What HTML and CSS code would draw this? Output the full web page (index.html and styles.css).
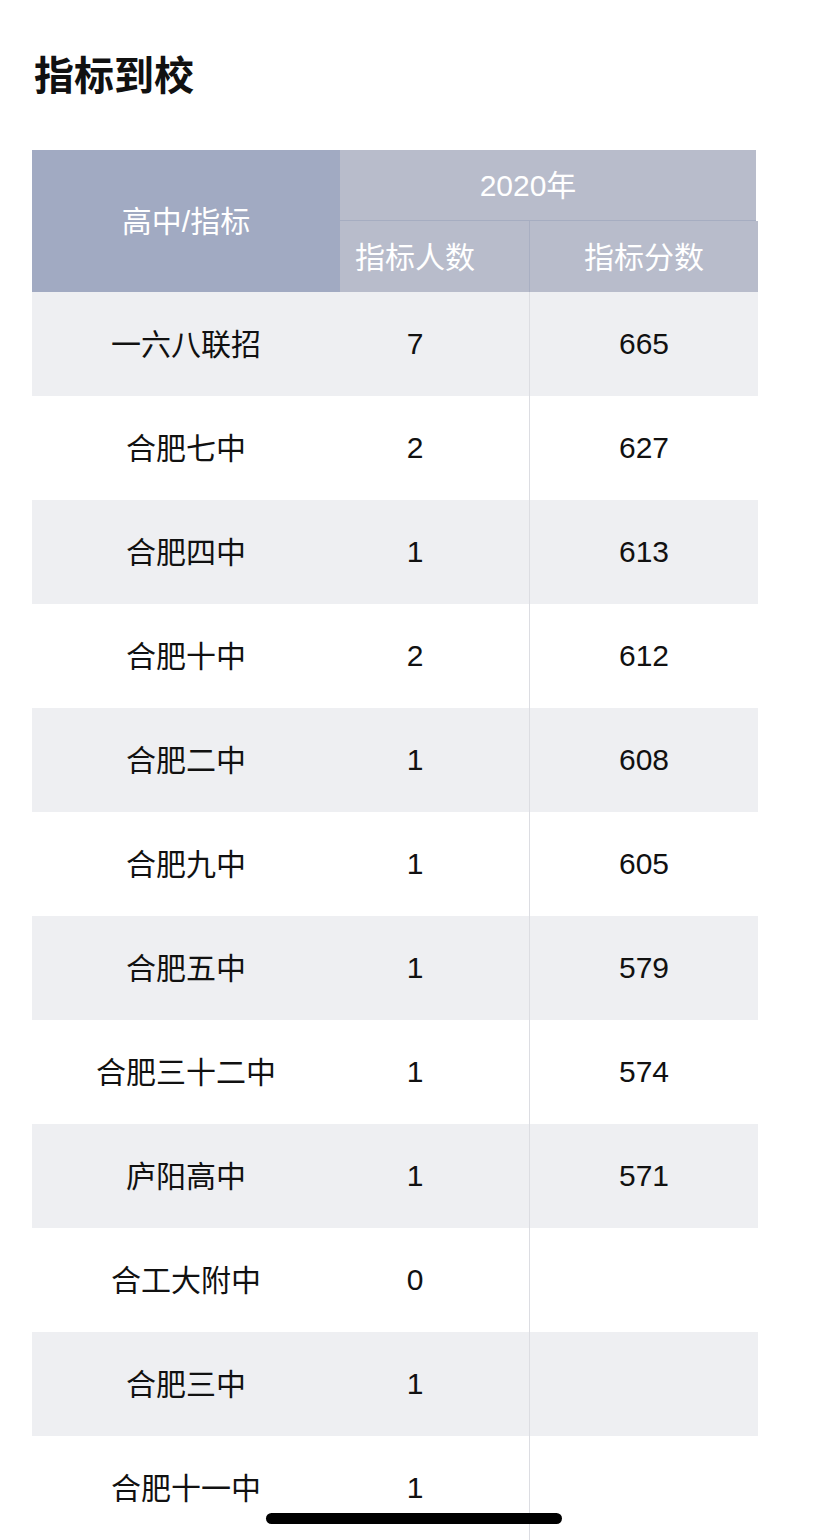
FILE: index.html
```html
<!DOCTYPE html>
<html lang="zh-CN">
<head>
<meta charset="utf-8">
<title>指标到校</title>
<link rel="stylesheet" href="styles.css">
</head>
<body>
<div class="page">
  <h1 class="title">指标到校</h1>
  <div class="table">
    <div class="thead">
      <div class="th th-school">高中/指标</div>
      <div class="th th-year">2020年</div>
      <div class="th th-count">指标人数</div>
      <div class="th th-score">指标分数</div>
    </div>
    <div class="row alt"><div class="c c1">一六八联招</div><div class="c c2">7</div><div class="c c3">665</div></div>
    <div class="row"><div class="c c1">合肥七中</div><div class="c c2">2</div><div class="c c3">627</div></div>
    <div class="row alt"><div class="c c1">合肥四中</div><div class="c c2">1</div><div class="c c3">613</div></div>
    <div class="row"><div class="c c1">合肥十中</div><div class="c c2">2</div><div class="c c3">612</div></div>
    <div class="row alt"><div class="c c1">合肥二中</div><div class="c c2">1</div><div class="c c3">608</div></div>
    <div class="row"><div class="c c1">合肥九中</div><div class="c c2">1</div><div class="c c3">605</div></div>
    <div class="row alt"><div class="c c1">合肥五中</div><div class="c c2">1</div><div class="c c3">579</div></div>
    <div class="row"><div class="c c1">合肥三十二中</div><div class="c c2">1</div><div class="c c3">574</div></div>
    <div class="row alt"><div class="c c1">庐阳高中</div><div class="c c2">1</div><div class="c c3">571</div></div>
    <div class="row"><div class="c c1">合工大附中</div><div class="c c2">0</div><div class="c c3"></div></div>
    <div class="row alt"><div class="c c1">合肥三中</div><div class="c c2">1</div><div class="c c3"></div></div>
    <div class="row"><div class="c c1">合肥十一中</div><div class="c c2">1</div><div class="c c3"></div></div>
  </div>
</div>
<div class="home-indicator"></div>
</body>
</html>
```

FILE: styles.css
```css
html, body {
  margin: 0;
  padding: 0;
  background: #ffffff;
  overflow: hidden;
}
body {
  width: 828px;
  height: 1540px;
  position: relative;
  font-family: "Liberation Sans", "Noto Sans CJK SC", sans-serif;
  color: #111111;
}
.page {
  padding: 0 0 0 32px;
}
.title {
  margin: 0;
  padding: 48px 0 0 2px;
  height: 150px;
  box-sizing: border-box;
  font-family: "Noto Sans CJK SC", sans-serif;
  font-weight: 700;
  font-size: 40px;
  line-height: 50px;
  color: #111111;
}
.table {
  width: 726px;
}
.thead {
  display: grid;
  grid-template-columns: 308px 189px 229px;
  grid-template-rows: 71px 71px;
  color: #ffffff;
  font-size: 30px;
}
.th {
  display: flex;
  align-items: center;
  justify-content: center;
}
.th-school {
  grid-row: 1 / 3;
  grid-column: 1;
  background: #a1aac2;
  padding-bottom: 4px;
}
.th-year {
  grid-column: 2 / 4;
  grid-row: 1;
  background: #b8bccb;
  border-bottom: 1px solid #a6adc1;
  margin-right: 2px;
  padding-right: 40px;
  padding-bottom: 5px;
}
.th-count {
  grid-column: 2;
  grid-row: 2;
  background: #b8bccb;
  padding-right: 39px;
  padding-bottom: 4px;
}
.th-score {
  grid-column: 3;
  grid-row: 2;
  background: #b8bccb;
  border-left: 1px solid #a9afc2;
  padding-bottom: 4px;
}
.row {
  display: grid;
  grid-template-columns: 308px 189px 229px;
  height: 104px;
  background: #ffffff;
  font-size: 30px;
}
.row.alt {
  background: #eeeff2;
}
.c {
  display: flex;
  align-items: center;
  justify-content: center;
}
.c1 {
  padding-bottom: 4px;
}
.c2 {
  padding-right: 39px;
}
.c3 {
  border-left: 1px solid #dcdde2;
}
.home-indicator {
  position: absolute;
  left: 266px;
  top: 1513px;
  width: 296px;
  height: 11px;
  border-radius: 6px;
  background: #000000;
}
```
